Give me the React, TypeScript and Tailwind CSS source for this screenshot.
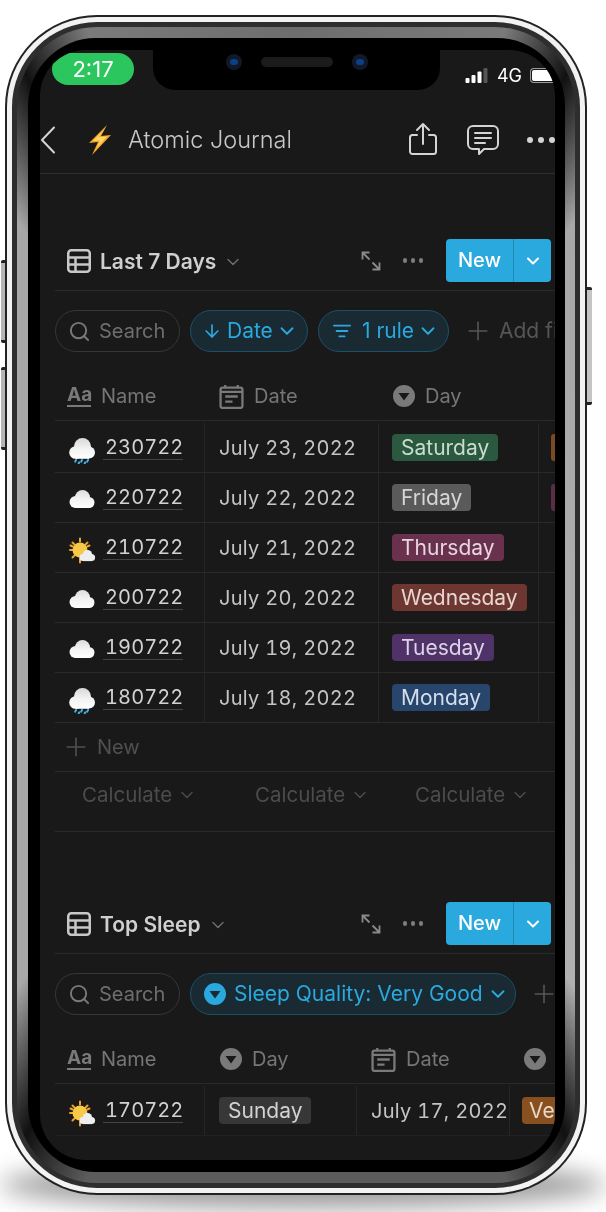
import { ArrowDown, ChevronDown, Plus, Search } from "lucide-react"
import type { ReactNode } from "react"

const days = [
  { id: "230722", date: "July 23, 2022", day: "Saturday", tag: "bg-[#2b593f] text-[#c8dccf]", weather: "rain", peek: "bg-[#7a4a20]" },
  { id: "220722", date: "July 22, 2022", day: "Friday", tag: "bg-[#5a5a5a] text-[#d6d6d6]", weather: "cloud", peek: "bg-[#5a2d45]" },
  { id: "210722", date: "July 21, 2022", day: "Thursday", tag: "bg-[#69314e] text-[#e6d6df]", weather: "sun", peek: "" },
  { id: "200722", date: "July 20, 2022", day: "Wednesday", tag: "bg-[#6e3630] text-[#e6d6d2]", weather: "cloud", peek: "" },
  { id: "190722", date: "July 19, 2022", day: "Tuesday", tag: "bg-[#4f3268] text-[#ddd4e8]", weather: "cloud", peek: "" },
  { id: "180722", date: "July 18, 2022", day: "Monday", tag: "bg-[#28456c] text-[#d3deee]", weather: "rain", peek: "" },
]

function Weather({ kind }: { kind: string }) {
  return (
    <svg viewBox="0 0 28 32" className="h-[32px] w-[28px] shrink-0">
      <defs>
        <linearGradient id={`cloud-${kind}`} gradientUnits="userSpaceOnUse" x1="0" y1="6" x2="0" y2="27">
          <stop offset="0" stopColor="#d8d8d8" />
          <stop offset="0.55" stopColor="#f4f4f4" />
          <stop offset="1" stopColor="#ffffff" />
        </linearGradient>
      </defs>
      {kind === "sun" && (
        <g>
          <g stroke="#eda32a" strokeWidth="2" strokeLinecap="round">
            <path d="M12 6.5v3M12 27v3.5M2 18h3M4.5 10.5l2 2M19.5 10.5l-2 2M4.5 25.5l2-2M2.5 13.5l2.2 1M21.5 13.5l-2.2 1" />
          </g>
          <circle cx="12" cy="18" r="7.5" fill="#f7c948" />
          <g fill="#eeeeee">
            <circle cx="15" cy="25.5" r="3.6" />
            <circle cx="19.5" cy="22.5" r="4.6" />
            <circle cx="23.5" cy="25.5" r="3.6" />
            <rect x="15" y="25" width="9" height="4.1" />
          </g>
        </g>
      )}
      {kind === "cloud" && (
        <g fill={`url(#cloud-${kind})`}>
          <circle cx="7.5" cy="20" r="6" />
          <circle cx="14.5" cy="15.5" r="7.5" />
          <circle cx="21" cy="20.5" r="5.5" />
          <rect x="7.5" y="18" width="13.5" height="8" />
        </g>
      )}
      {kind === "rain" && (
        <g>
          <g fill={`url(#cloud-${kind})`}>
            <circle cx="7.5" cy="20.5" r="6.3" />
            <circle cx="14.5" cy="14.5" r="8.5" />
            <circle cx="21" cy="20.5" r="6" />
            <rect x="7.5" y="17" width="13.5" height="9.8" />
          </g>
          <g stroke="#45b4e8" strokeWidth="2" strokeLinecap="round">
            <path d="M8 28l-.8 1.6M14 28l-.8 1.6M20 28l-.8 1.6M11.2 30.4l-.5.9M17.2 30.4l-.5.9" />
          </g>
        </g>
      )}
    </svg>
  )
}

function TableIcon() {
  return (
    <svg viewBox="0 0 24 24" className="h-[24px] w-[24px] shrink-0" fill="none" stroke="#c8c8c8" strokeWidth="2.5">
      <rect x="1.25" y="1.25" width="21.5" height="21.5" rx="3" />
      <path d="M1 8.5h22M1 15.5h22M8.5 8.5V23" />
    </svg>
  )
}

function CalendarIcon() {
  return (
    <svg viewBox="0 0 24 24" className="h-[25px] w-[25px] shrink-0" fill="none" stroke="#7a7a7a" strokeWidth="2.2">
      <rect x="1.5" y="3.5" width="21" height="19.5" rx="2" />
      <path d="M1.5 7.5h21M6 1v3M18 1v3" />
      <path d="M6 12h12M6 17h7" />
    </svg>
  )
}

function SelectIcon({ fill = "#7a7a7a", inner = "#191919" }: { fill?: string; inner?: string }) {
  return (
    <svg viewBox="0 0 22 22" className="h-[22px] w-[22px] shrink-0">
      <circle cx="11" cy="11" r="11" fill={fill} />
      <path d="M5.5 8h11L11 15.5Z" fill={inner} />
    </svg>
  )
}

function AaIcon() {
  return (
    <span className="w-[24px] shrink-0 border-b-2 border-[#7a7a7a] text-center text-[19px] leading-[20px] font-bold text-[#7a7a7a]">
      Aa
    </span>
  )
}

function ViewHeader({ title }: { title: string }) {
  return (
    <div className="flex h-[52px] items-start border-b border-[#2a2a2a] pr-[4px] pl-[12px]">
      <div className="flex h-[43px] items-center">
        <TableIcon />
        <span className="mt-[2px] ml-[9px] text-[21px] font-semibold text-[#cfcfcf]">{title}</span>
        <ChevronDown className="mt-[2px] ml-[7px] h-[20px] w-[20px] text-[#6e6e6e]" strokeWidth={1.7} />
      </div>
      <div className="ml-auto flex h-[43px] items-center">
        <svg viewBox="0 0 20 20" className="h-[20px] w-[20px] translate-x-[-1px]" fill="none" stroke="#8a8a8a" strokeWidth="1.8">
          <path d="M1.5 1.5l7 7M1.5 8.5v-7h7M18.5 18.5l-7-7M18.5 11.5v7h-7" />
        </svg>
        <span className="mr-[23px] ml-[21px] flex gap-[3.5px]">
          <i className="h-[4.5px] w-[4.5px] rounded-full bg-[#7d7d7d]" />
          <i className="h-[4.5px] w-[4.5px] rounded-full bg-[#7d7d7d]" />
          <i className="h-[4.5px] w-[4.5px] rounded-full bg-[#7d7d7d]" />
        </span>
        <div className="flex h-[43px] w-[105px] items-center rounded-[4px] bg-[#2aa9df] text-white">
          <span className="w-[68px] border-r border-[#2288b5] text-center text-[20px] leading-[43px] font-medium">New</span>
          <ChevronDown className="ml-[9px] h-[20px] w-[20px]" strokeWidth={2.4} />
        </div>
      </div>
    </div>
  )
}

function SearchPill() {
  return (
    <div className="flex h-[42px] w-[125px] shrink-0 items-center rounded-full border border-[#363636] pl-[12px] text-[20px] text-[#6e6e6e]">
      <Search className="h-[23px] w-[23px] text-[#7a7a7a]" strokeWidth={2} />
      <span className="ml-[8px]">Search</span>
    </div>
  )
}

function FilterPill({ children, width }: { children: ReactNode; width: string }) {
  return (
    <div className={`flex h-[42px] shrink-0 items-center rounded-full border border-[#1d5068] bg-[#192a33] text-[21px] text-[#2aa9df] ${width}`}>
      {children}
    </div>
  )
}

function AddFilter({ label }: { label?: string }) {
  return (
    <div className="flex shrink-0 items-center whitespace-nowrap text-[21px] text-[#555555]">
      <Plus className="h-[30px] w-[30px]" strokeWidth={1.3} />
      {label && <span className="ml-[6px]">{label}</span>}
    </div>
  )
}

function ColumnHead({ width, icon, label }: { width: string; icon: ReactNode; label: string }) {
  return (
    <div className={`flex shrink-0 items-center pl-[12px] ${width}`}>
      {icon}
      <span className="ml-[10px] text-[20px] text-[#767676]">{label}</span>
    </div>
  )
}

function NameCell({ id, weather, width }: { id: string; weather: string; width: string }) {
  return (
    <div className={`flex h-full shrink-0 items-center border-r border-[#262626] pl-[13px] ${width}`}>
      <Weather kind={weather} />
      <span className="ml-[7px] border-b border-[#444444] pl-[2px] text-[20px] leading-[24px] tracking-[0.1px] text-[#d2d2d2] tabular-nums">{id}</span>
    </div>
  )
}

function Tag({ className, children }: { className: string; children: ReactNode }) {
  return (
    <span className={`rounded-[4px] px-[9px] text-[21px] leading-[27px] ${className}`}>{children}</span>
  )
}

export default function App() {
  return (
    <div className="relative h-[1212px] w-[606px] overflow-hidden bg-white font-['Inter',sans-serif] blur-[0.4px]">
      {/* Floor shadow */}
      <div className="absolute right-0 bottom-[4px] left-0 h-[46px] rounded-[50%] bg-[#9a9a9a] blur-[12px]" />

      {/* Side buttons */}
      <div className="absolute top-[260px] left-[1px] h-[83px] w-[8px] rounded-l-[2px] border-y-[3px] border-y-[#222222] bg-[#b5b5b5]" />
      <div className="absolute top-[367px] left-[1px] h-[83px] w-[8px] rounded-l-[2px] border-y-[3px] border-y-[#222222] bg-[#b5b5b5]" />
      <div className="absolute top-[287px] left-[584px] h-[118px] w-[8px] rounded-r-[2px] border-y-[3px] border-y-[#222222] bg-[#c4c4c4]" />

      {/* Phone frame */}
      <div className="relative mt-[15px] ml-[5px] h-[1180px] w-[582px] rounded-[92px] bg-[#222222] p-[2px]">
        <div className="h-full rounded-[90px] bg-[#f2f2f2] p-[5px]">
          <div className="h-full rounded-[85px] bg-[#2e2e2e] p-[5px]">
            <div className="h-full rounded-[80px] bg-[conic-gradient(#6e6e6e_0deg,#7a7a7a_20deg,#111111_27deg,#a8a8a8_36deg,#b0b0b0_144deg,#111111_153deg,#5c5c5c_160deg,#5c5c5c_200deg,#111111_207deg,#a8a8a8_216deg,#a8a8a8_324deg,#111111_333deg,#7a7a7a_340deg,#6e6e6e_360deg)] p-[11px] pr-[10px]">
              <div className="h-full rounded-[68px] bg-black pt-[12px] pr-[10px] pb-[12px] pl-[12px]">
                {/* Screen */}
                <div className="relative flex h-full flex-col overflow-hidden rounded-[46px] bg-[#191919]">
                  {/* Notch */}
                  <div className="absolute top-0 left-[113px] flex h-[40px] w-[287px] items-start justify-center rounded-b-[22px] bg-black pt-[4px]">
                    <span className="flex h-[16px] w-[16px] items-center justify-center rounded-full bg-[#111827]">
                      <span className="h-[6px] w-[8px] rounded-full bg-[#0b3f86]" />
                    </span>
                    <span className="mx-[19px] mt-[3px] h-[10px] w-[72px] rounded-full bg-[#1b1b1b]" />
                    <span className="flex h-[16px] w-[16px] items-center justify-center rounded-full bg-[#111827]">
                      <span className="h-[6px] w-[8px] rounded-full bg-[#0b3f86]" />
                    </span>
                  </div>

                  {/* Status bar */}
                  <div className="flex h-[50px] shrink-0 items-start pt-[3px] pl-[12px]">
                    <div className="flex h-[32px] w-[82px] items-center justify-center rounded-full bg-[#2cc65e] text-[22px] text-white">
                      2:17
                    </div>
                    <div className="ml-auto flex h-[33px] items-end">
                      <svg viewBox="0 0 22 15" className="mb-[3px] h-[15px] w-[25px]">
                        <rect x="0" y="10" width="4" height="5" rx="1" fill="#fff" />
                        <rect x="6" y="7" width="4" height="8" rx="1" fill="#fff" />
                        <rect x="12" y="3.5" width="4" height="11.5" rx="1" fill="#fff" />
                        <rect x="18" y="0" width="4" height="15" rx="1" fill="#555" />
                      </svg>
                      <span className="ml-[8px] text-[18px] leading-[20px] text-white">4G</span>
                      <span className="mb-[3px] ml-[8px] flex h-[15px] w-[25px] rounded-l-[4px] border border-r-0 border-[#9a9a9a] p-[1px] pr-0">
                        <span className="h-full w-full rounded-l-[2px] bg-white" />
                      </span>
                    </div>
                  </div>

                  {/* Nav bar */}
                  <div className="flex h-[74px] shrink-0 items-center border-b border-[#2e2e2e] pt-[6px]">
                    <svg viewBox="0 0 16 28" className="h-[28px] w-[16px]" fill="none" stroke="#d4d4d4" strokeWidth="2" strokeLinecap="round" strokeLinejoin="round">
                      <path d="M14 1.5 2 14l12 12.5" />
                    </svg>
                    <svg viewBox="0 0 24 32" className="ml-[32px] h-[32px] w-[24px]">
                      <path d="M19 1 1 19l9-1-6 13 19-20-10 1Z" fill="#f5a623" />
                      <path d="M16.5 5 5 17l7-.6-3.5 8L19 12.5l-8.5.8Z" fill="#fdd868" />
                    </svg>
                    <span className="ml-[16px] text-[23.5px] font-light text-[#c9c9c9]">Atomic Journal</span>
                    <svg viewBox="0 0 28 34" className="mb-[2px] ml-auto h-[34px] w-[28px]" fill="none" stroke="#d4d4d4" strokeWidth="2" strokeLinecap="round" strokeLinejoin="round">
                      <path d="M8 13H3.5A2.5 2.5 0 0 0 1 15.5v14A2.5 2.5 0 0 0 3.5 32h21a2.5 2.5 0 0 0 2.5-2.5v-14a2.5 2.5 0 0 0-2.5-2.5H20" />
                      <path d="M14 22V2M8 8l6-6 6 6" />
                    </svg>
                    <svg viewBox="0 0 32 30" className="ml-[30px] h-[30px] w-[32px]" fill="none" stroke="#d4d4d4" strokeWidth="2" strokeLinecap="round" strokeLinejoin="round">
                      <path d="M6 1h20a5 5 0 0 1 5 5v13a5 5 0 0 1-5 5H17l-5 5v-5H6a5 5 0 0 1-5-5V6a5 5 0 0 1 5-5Z" />
                      <path d="M8 8h16M8 13h16M8 18h10" />
                    </svg>
                    <span className="ml-[28px] flex gap-[5px]">
                      <i className="h-[6px] w-[6px] rounded-full bg-[#d4d4d4]" />
                      <i className="h-[6px] w-[6px] rounded-full bg-[#d4d4d4]" />
                      <i className="h-[6px] w-[6px] rounded-full bg-[#d4d4d4]" />
                    </span>
                  </div>

                  {/* Page */}
                  <div className="flex flex-col pt-[65px] pl-[15px]">
                    <ViewHeader title="Last 7 Days" />
                    <div className="mt-[19px] flex items-center gap-[10px]">
                      <SearchPill />
                      <FilterPill width="w-[118px] pl-[11px]">
                        <ArrowDown className="h-[20px] w-[20px]" strokeWidth={2} />
                        <span className="ml-[5px]">Date</span>
                        <ChevronDown className="ml-[3px] h-[22px] w-[22px]" strokeWidth={2} />
                      </FilterPill>
                      <FilterPill width="w-[131px] pl-[14px]">
                        <svg viewBox="0 0 20 16" className="h-[16px] w-[18px]" fill="none" stroke="currentColor" strokeWidth="2" strokeLinecap="round">
                          <path d="M1 2h18M4 8h12M7 14h6" />
                        </svg>
                        <span className="ml-[11px]">1 rule</span>
                        <ChevronDown className="ml-[3px] h-[22px] w-[22px]" strokeWidth={2} />
                      </FilterPill>
                      <div className="ml-[4px]">
                        <AddFilter label="Add filter" />
                      </div>
                    </div>
                    <div className="mt-[20px] flex h-[49px] items-center border-b border-[#2a2a2a]">
                      <ColumnHead width="w-[150px]" icon={<AaIcon />} label="Name" />
                      <ColumnHead width="w-[174px] pl-[14px]!" icon={<CalendarIcon />} label="Date" />
                      <ColumnHead width="w-[160px] pl-[14px]!" icon={<SelectIcon />} label="Day" />
                    </div>
                    <div className="mt-[2px] flex flex-col">
                      {days.map((row) => (
                        <div key={row.id} className="flex h-[50px] items-center border-b border-[#2a2a2a]">
                          <NameCell id={row.id} weather={row.weather} width="w-[150px]" />
                          <div className="flex h-full w-[174px] shrink-0 items-center border-r border-[#262626] pl-[14px] text-[20px] tracking-[0.3px] whitespace-nowrap text-[#c4c4c4] tabular-nums">
                            {row.date}
                          </div>
                          <div className="flex h-full w-[160px] shrink-0 items-center border-r border-[#262626] pl-[13px]">
                            <Tag className={row.tag}>{row.day}</Tag>
                          </div>
                          <div className="flex h-full flex-1 items-center pl-[12px]">
                            {row.peek && <span className={`h-[27px] w-[8px] rounded-l-[3px] ${row.peek}`} />}
                          </div>
                        </div>
                      ))}
                    </div>
                    <div className="flex h-[49px] items-center border-b border-[#2a2a2a] pl-[6px] text-[20px] text-[#505050]">
                      <Plus className="h-[30px] w-[30px]" strokeWidth={1.3} />
                      <span className="ml-[6px]">New</span>
                    </div>
                    <div className="flex h-[60px] items-start border-b border-[#2a2a2a] pt-[8px] text-[20.5px] text-[#4c4c4c]">
                      <div className="flex w-[173px] items-center pl-[27px]">
                        Calculate
                        <ChevronDown className="ml-[5px] h-[20px] w-[20px]" strokeWidth={1.7} />
                      </div>
                      <div className="flex w-[187px] items-center pl-[27px]">
                        Calculate
                        <ChevronDown className="ml-[5px] h-[20px] w-[20px]" strokeWidth={1.7} />
                      </div>
                      <div className="flex items-center whitespace-nowrap">
                        Calculate
                        <ChevronDown className="ml-[5px] h-[20px] w-[20px]" strokeWidth={1.7} />
                      </div>
                    </div>

                    <div className="mt-[70px]">
                      <ViewHeader title="Top Sleep" />
                    </div>
                    <div className="mt-[19px] flex items-center gap-[10px]">
                      <SearchPill />
                      <FilterPill width="w-[326px] pl-[13px]">
                        <SelectIcon fill="#2aa9df" inner="#192a33" />
                        <span className="ml-[8px] whitespace-nowrap">Sleep Quality: Very Good</span>
                        <ChevronDown className="ml-[4px] h-[22px] w-[22px]" strokeWidth={2} />
                      </FilterPill>
                      <div className="ml-[3px]">
                        <AddFilter />
                      </div>
                    </div>
                    <div className="mt-[20px] flex h-[49px] items-center border-b border-[#2a2a2a]">
                      <ColumnHead width="w-[150px]" icon={<AaIcon />} label="Name" />
                      <ColumnHead width="w-[152px] pl-[15px]!" icon={<SelectIcon />} label="Day" />
                      <ColumnHead width="w-[153px] pl-[14px]!" icon={<CalendarIcon />} label="Date" />
                      <div className="pl-[14px]">
                        <SelectIcon />
                      </div>
                    </div>
                    <div className="mt-[2px] flex h-[50px] items-center border-b border-[#212121]">
                      <NameCell id="170722" weather="sun" width="w-[150px]" />
                      <div className="flex h-full w-[152px] shrink-0 items-center border-r border-[#262626] pl-[14px]">
                        <Tag className="bg-[#373737] text-[#d2d2d2]">Sunday</Tag>
                      </div>
                      <div className="flex h-full w-[153px] shrink-0 items-center border-r border-[#262626] pl-[14px] text-[20px] tracking-[0.3px] whitespace-nowrap text-[#c4c4c4] tabular-nums">
                        July 17, 2022
                      </div>
                      <div className="flex h-full flex-1 items-center overflow-hidden pl-[12px]">
                        <span className="rounded-l-[4px] bg-[#89501f] pl-[7px] text-[21px] leading-[27px] whitespace-nowrap text-[#e8d8c8]">
                          Very Good
                        </span>
                      </div>
                    </div>
                  </div>
                </div>
              </div>
            </div>
          </div>
        </div>
      </div>
    </div>
  )
}
